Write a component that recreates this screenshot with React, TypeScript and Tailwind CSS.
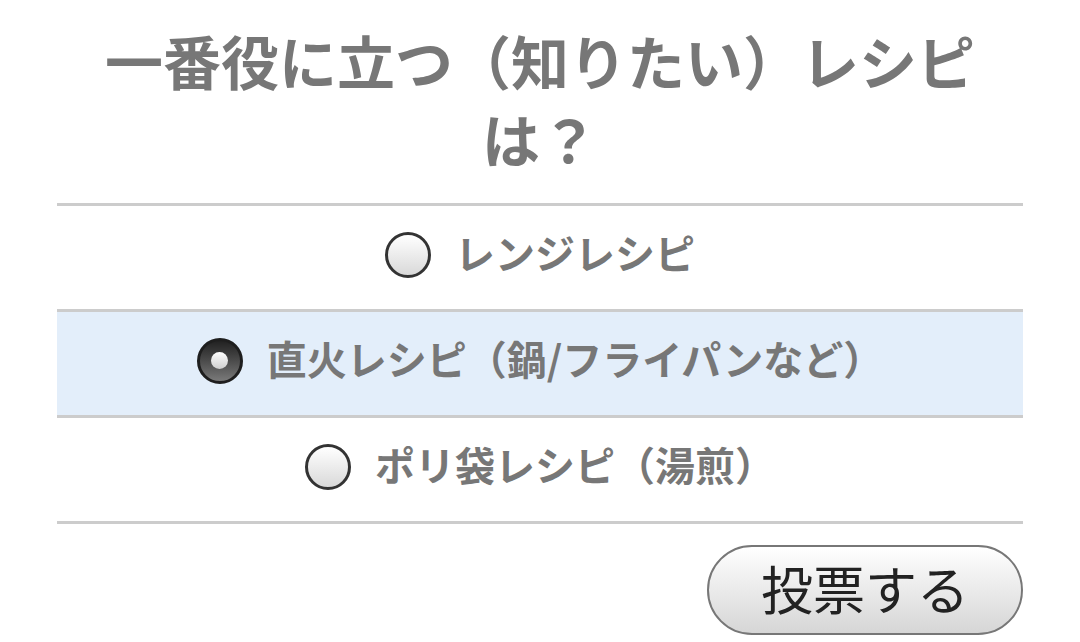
import { useState } from 'react';

const options = ['レンジレシピ', '直火レシピ（鍋/フライパンなど）', 'ポリ袋レシピ（湯煎）'];

function Radio({ checked }: { checked: boolean }) {
  if (checked) {
    return (
      <span className="w-[46px] h-[46px] rounded-full border-[3px] border-[#1e1e1e] bg-gradient-to-b from-[#222] to-[#7a7a7a] flex items-center justify-center shrink-0">
        <span className="w-[17px] h-[17px] rounded-full bg-gradient-to-b from-white to-[#cfcfcf]" />
      </span>
    );
  }
  return (
    <span className="w-[46px] h-[46px] rounded-full border-[3px] border-[#333] bg-gradient-to-b from-white to-[#d9d9d9] shrink-0" />
  );
}

export default function App() {
  const [selected, setSelected] = useState(1);

  return (
    <div
      className="w-[1080px] h-[642px] bg-white overflow-hidden"
      style={{ fontFamily: '"Noto Sans CJK JP", "Noto Sans", sans-serif' }}
    >
      <div className="w-[966px] ml-[57px]">
        <h1 className="pt-[21px] pb-[5px] text-center text-[58px] leading-[78px] font-bold text-[#777] px-[40px]">
          一番役に立つ（知りたい）レシピは？
        </h1>

        <div className="mt-[21px] border-b-[3px] border-[#ccc]">
          {options.map((label, i) => (
            <button
              key={label}
              onClick={() => setSelected(i)}
              className={`w-full h-[106px] pb-[6px] border-t-[3px] border-[#ccc] flex items-center justify-center gap-[24px] ${
                selected === i ? 'bg-[#e3eefa]' : 'bg-white'
              }`}
            >
              <Radio checked={selected === i} />
              <span className="text-[40px] font-bold text-[#777] leading-none pb-[6px]">{label}</span>
            </button>
          ))}
        </div>

        <div className="flex justify-end mt-[21px]">
          <button className="w-[316px] h-[90px] pb-[4px] rounded-full border-2 border-[#777] bg-gradient-to-b from-white to-[#d6d6d6] text-[52px] text-[#222] leading-none">
            投票する
          </button>
        </div>
      </div>
    </div>
  );
}
